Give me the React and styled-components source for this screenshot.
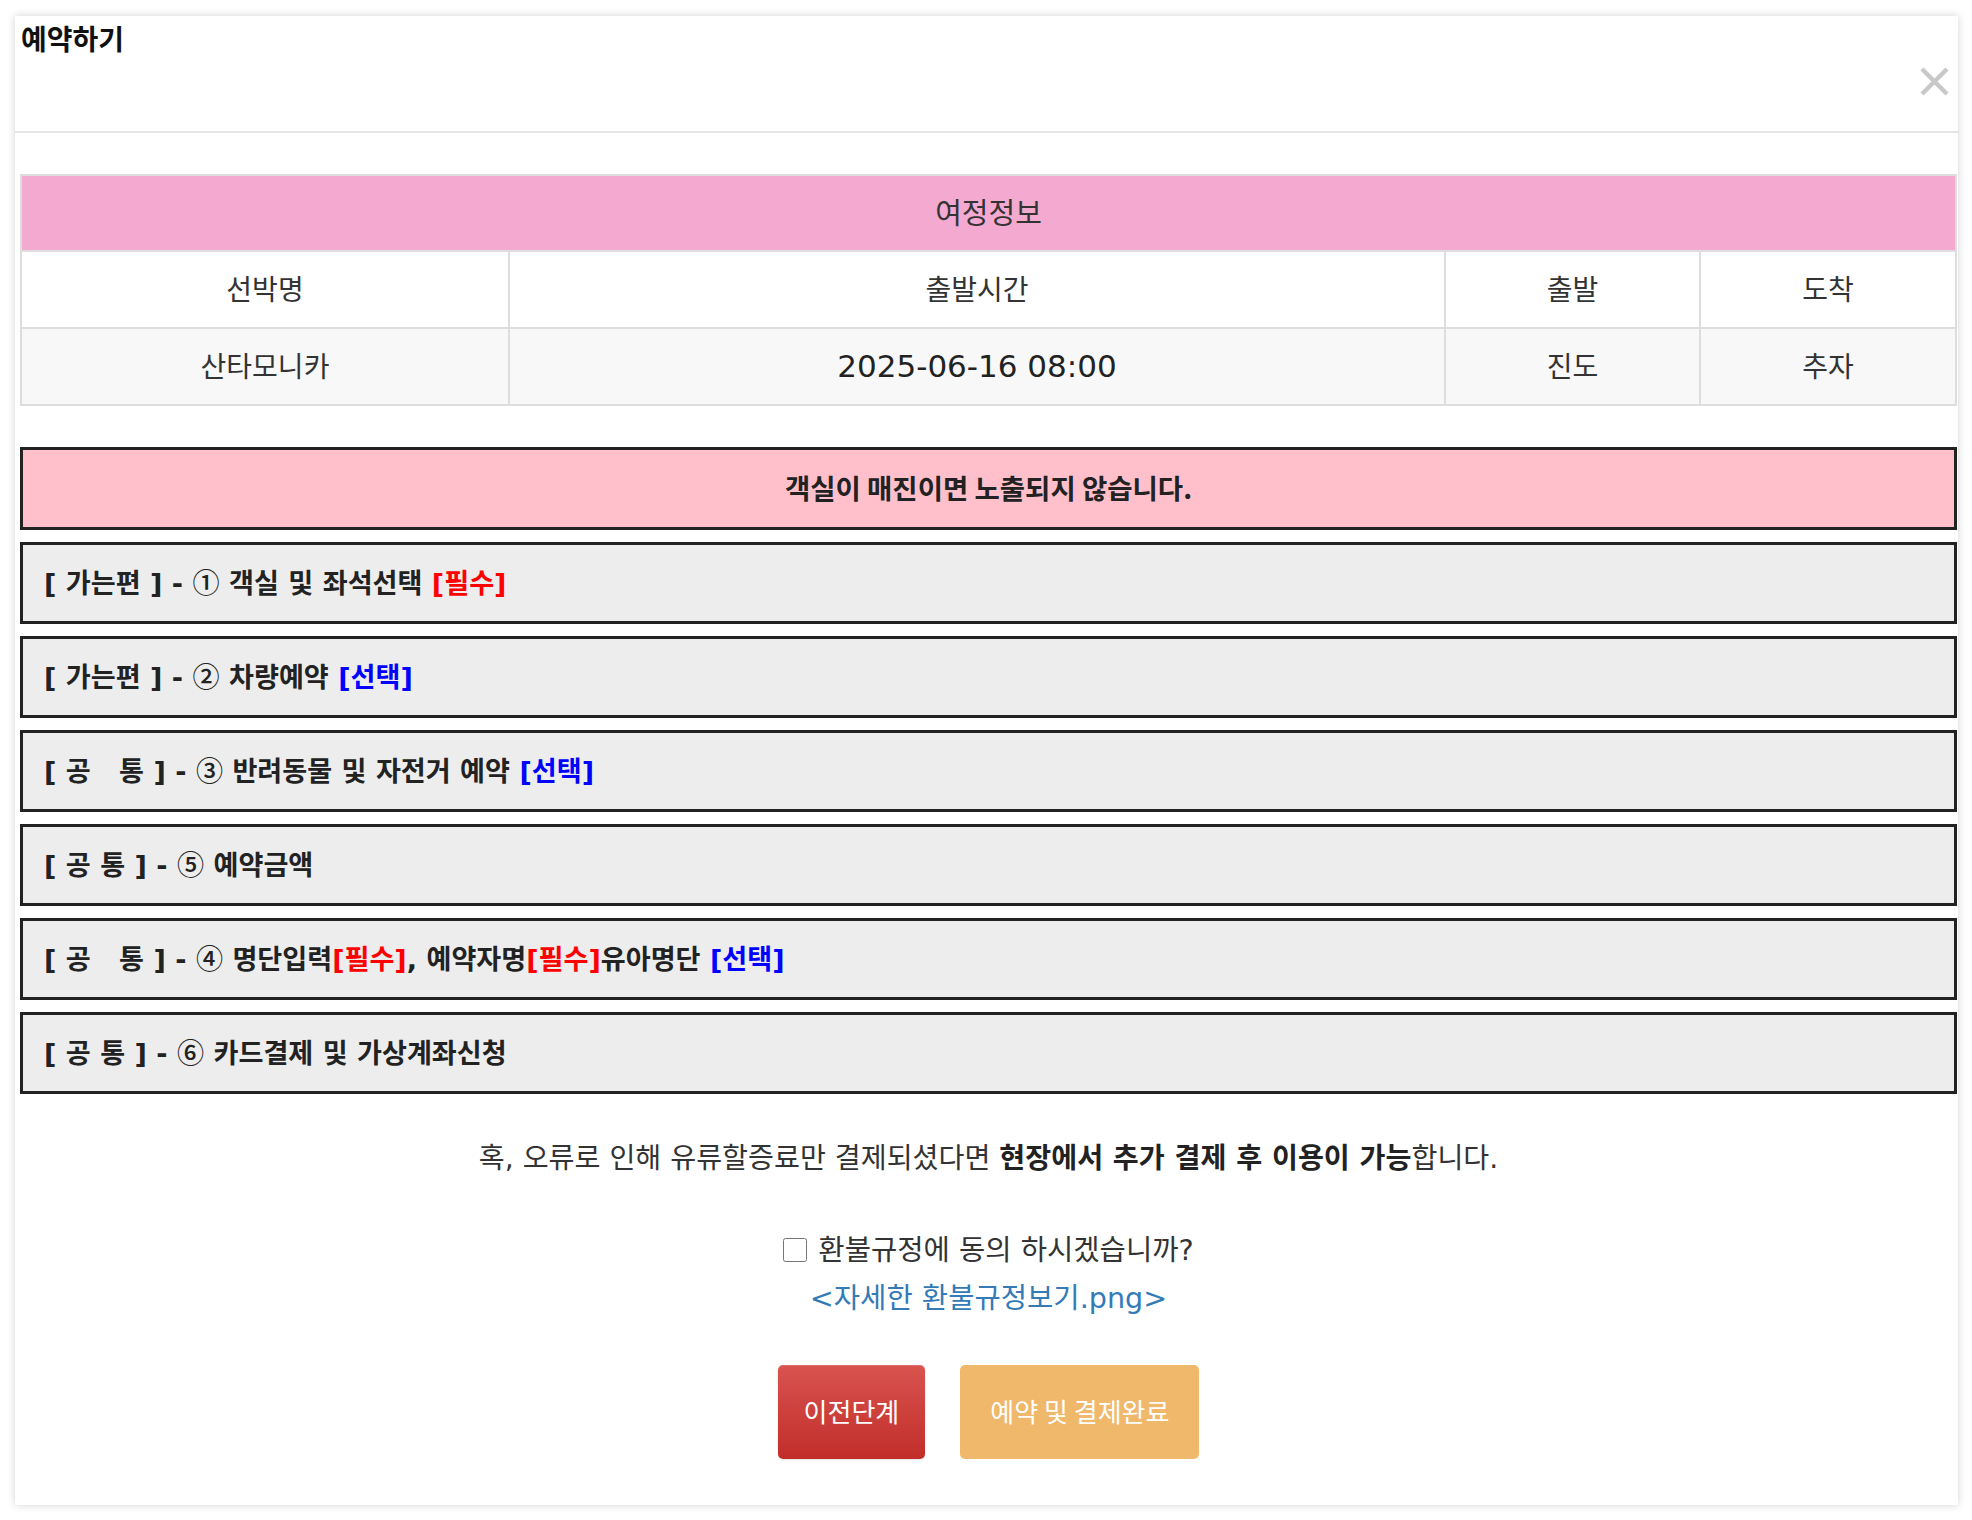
import React, { useState } from 'react';
import styled, { createGlobalStyle } from 'styled-components';

const GlobalStyle = createGlobalStyle`
    * { box-sizing: border-box; }
    body {
        margin: 0;
        background: #fff;
        font-family: "DejaVu Sans", "Noto Sans CJK KR", sans-serif;
        color: #333;
    }
`;

const Page = styled.div`
    padding: 16px 14px 15px 15px;
`;

const Modal = styled.div`
    background: #fff;
    box-shadow: 0 0 8px rgba(0, 0, 0, 0.18);
    padding-bottom: 46px;
`;

const Header = styled.div`
    height: 117px;
    display: flex;
    justify-content: space-between;
    align-items: flex-start;
    border-bottom: 2px solid #e5e5e5;
    padding: 3px 9px 0 6px;
`;

const Title = styled.h4`
    margin: 0;
    font-family: "Noto Sans CJK KR", sans-serif;
    font-size: 28px;
    font-weight: 700;
    line-height: 38px;
    color: #111;
`;

const Close = styled.button`
    margin-top: 47px;
    width: 30px;
    height: 30px;
    padding: 0;
    border: none;
    background: none;
    cursor: pointer;
    display: flex;
    align-items: center;
    justify-content: center;
`;

const Body = styled.div`
    padding: 41px 1px 0 5px;
`;

const Table = styled.table`
    width: 100%;
    border-collapse: collapse;
    border: 2px solid #ddd;
    font-family: "Noto Sans CJK KR", sans-serif;
    font-size: 28px;
    color: #333;
`;

const HeadCell = styled.th`
    height: 76px;
    padding: 0 0 4px;
    background: #f4a9d1;
    font-weight: 400;
    font-size: 29px;
    text-align: center;
    border: 2px solid #ddd;
`;

const Cell = styled.td`
    height: 77px;
    padding: 0 0 4px;
    text-align: center;
    border: 2px solid #ddd;
    background: ${p => p.$alt ? '#f8f8f8' : '#fff'};
    width: ${p => p.$w || 'auto'};
`;

const DateText = styled.span`
    font-family: "DejaVu Sans", sans-serif;
    font-size: 31px;
    color: #222;
`;

const Stack = styled.div`
    display: flex;
    flex-direction: column;
    gap: 12px;
    margin-top: 41px;
`;

const Notice = styled.div`
    height: 83px;
    display: flex;
    align-items: center;
    justify-content: center;
    padding-bottom: 4px;
    background: #ffc0cb;
    border: 3px solid #222;
    font-family: "Noto Sans CJK KR", sans-serif;
    font-size: 27.5px;
    font-weight: 700;
    color: #222;
`;

const Section = styled.div`
    height: 82px;
    display: flex;
    align-items: center;
    padding: 0 21px 4px;
    background: #ededed;
    border: 3px solid #222;
    font-size: 27.1px;
    font-weight: 700;
    color: #222;
    white-space: pre;
    cursor: pointer;
`;

const Num = styled.span`
    font-family: "Noto Sans CJK KR", sans-serif;
    font-weight: 500;
`;

const Tag = styled.span`
    color: ${p => p.$req ? '#ff0000' : '#0000ff'};
`;

const Note = styled.p`
    margin: 46px 0 0;
    text-align: center;
    font-size: 28.2px;
    line-height: 38px;
    color: #333;
    b { color: #222; }
`;

const Agree = styled.label`
    display: flex;
    align-items: center;
    justify-content: center;
    gap: 11px;
    margin-top: 53px;
    font-size: 28.6px;
    line-height: 38px;
    color: #333;
    input {
        width: 24px;
        height: 24px;
        margin: 0;
    }
`;

const RuleLink = styled.a`
    display: block;
    margin-top: 10px;
    text-align: center;
    font-size: 28.6px;
    line-height: 38px;
    color: #337ab7;
    text-decoration: none;
`;

const Buttons = styled.div`
    display: flex;
    justify-content: center;
    gap: 35px;
    margin-top: 48px;
`;

const Button = styled.button`
    height: 94px;
    padding: 0 ${p => p.$pad}px 3px;
    border: none;
    border-radius: 5px;
    font-family: "Noto Sans CJK KR", sans-serif;
    font-size: 26px;
    color: #fff;
    cursor: pointer;
    background: ${p => p.$kind === 'prev'
        ? 'linear-gradient(to bottom, #d9534f 0%, #c12e2a 100%)'
        : '#f0b86a'};
    box-shadow: ${p => p.$kind === 'prev'
        ? 'inset 0 1px 0 rgba(255,255,255,.15), 0 1px 2px rgba(0,0,0,.12)'
        : 'none'};
`;

const sections = [
    { head: '[ 가는편 ] - ', num: '①', label: ' 객실 및 좌석선택 ', tags: [['[필수]', true]] },
    { head: '[ 가는편 ] - ', num: '②', label: ' 차량예약 ', tags: [['[선택]', false]] },
    { head: '[ 공   통 ] - ', num: '③', label: ' 반려동물 및 자전거 예약 ', tags: [['[선택]', false]] },
    { head: '[ 공 통 ] - ', num: '⑤', label: ' 예약금액', tags: [] },
];

function App() {
    const [agree, setAgree] = useState(false);

    return (
        <Page>
            <GlobalStyle />
            <Modal>
                <Header>
                    <Title>예약하기</Title>
                    <Close aria-label="close">
                        <svg width="29" height="29" viewBox="0 0 29 29">
                            <path d="M2 2 L27 27 M27 2 L2 27" stroke="#c8c8c8" strokeWidth="4.4" />
                        </svg>
                    </Close>
                </Header>
                <Body>
                    <Table>
                        <thead>
                            <tr><HeadCell colSpan={4}>여정정보</HeadCell></tr>
                        </thead>
                        <tbody>
                            <tr>
                                <Cell $w="488px">선박명</Cell>
                                <Cell $w="936px">출발시간</Cell>
                                <Cell $w="255px">출발</Cell>
                                <Cell>도착</Cell>
                            </tr>
                            <tr>
                                <Cell $alt>산타모니카</Cell>
                                <Cell $alt><DateText>2025-06-16 08:00</DateText></Cell>
                                <Cell $alt>진도</Cell>
                                <Cell $alt>추자</Cell>
                            </tr>
                        </tbody>
                    </Table>

                    <Stack>
                        <Notice>객실이 매진이면 노출되지 않습니다.</Notice>
                        {sections.map((s, i) => (
                            <Section key={i}>
                                {s.head}<Num>{s.num}</Num>{s.label}
                                {s.tags.map(([t, req], j) => <Tag key={j} $req={req}>{t}</Tag>)}
                            </Section>
                        ))}
                        <Section>
                            {'[ 공   통 ] - '}<Num>④</Num>{' 명단입력'}<Tag $req>[필수]</Tag>, 예약자명<Tag $req>[필수]</Tag>유아명단 <Tag>[선택]</Tag>
                        </Section>
                        <Section>
                            {'[ 공 통 ] - '}<Num>⑥</Num>{' 카드결제 및 가상계좌신청'}
                        </Section>
                    </Stack>

                    <Note>
                        혹, 오류로 인해 유류할증료만 결제되셨다면 <b>현장에서 추가 결제 후 이용이 가능</b>합니다.
                    </Note>

                    <Agree>
                        <input type="checkbox" checked={agree} onChange={e => setAgree(e.target.checked)} />
                        환불규정에 동의 하시겠습니까?
                    </Agree>
                    <RuleLink href="#">&lt;자세한 환불규정보기.png&gt;</RuleLink>

                    <Buttons>
                        <Button $kind="prev" $pad={26}>이전단계</Button>
                        <Button $kind="done" $pad={30}>예약 및 결제완료</Button>
                    </Buttons>
                </Body>
            </Modal>
        </Page>
    );
}

export default App;
